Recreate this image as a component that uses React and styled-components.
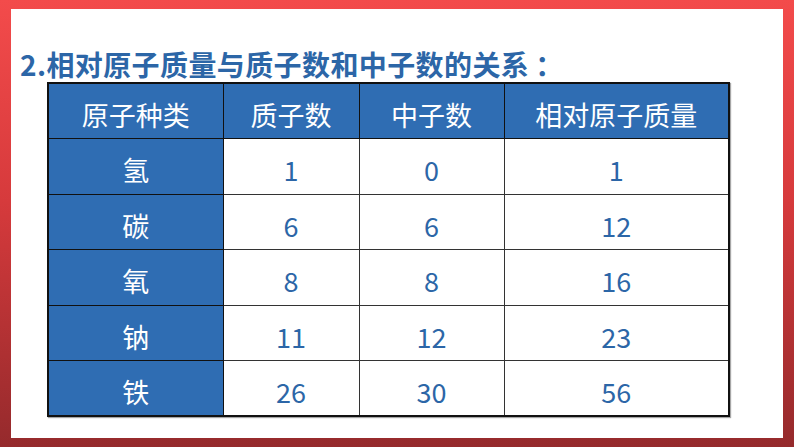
import React from "react";
import styled, { createGlobalStyle } from "styled-components";

const Global = createGlobalStyle`
  html, body { margin: 0; padding: 0; }
  body { font-family: "Noto Sans CJK SC", "Noto Sans", sans-serif; }
`;

const Frame = styled.div`
  width: 794px;
  height: 447px;
  box-sizing: border-box;
  padding: 9px 11px 9px 11px;
  background: linear-gradient(180deg, #f34b4b 0%, #d63a3c 45%, #952a2c 100%);
`;

const Sheet = styled.div`
  height: 100%;
  background: #ffffff;
  padding: 37px 0 0 9px;
  box-sizing: border-box;
`;

const Title = styled.h2`
  margin: 0;
  font-size: 28px;
  line-height: 36px;
  font-weight: 700;
  color: #2c66a7;
  letter-spacing: 0.4px;
`;

const Colon = styled.span`
  margin-left: 6px;
`;

const Table = styled.table`
  margin: 0 0 0 27px;
  border-collapse: collapse;
  border: 2px solid #111;
  box-shadow: 1px 1px 1px rgba(0, 0, 0, 0.35);
  table-layout: fixed;
`;

const Cell = styled.td`
  height: 55.5px;
  padding: 8px 0 0;
  box-sizing: border-box;
  text-align: center;
  vertical-align: middle;
  font-size: 27px;
  font-weight: 400;
  line-height: 36px;
  border: 1px solid ${(p) => (p.$blue ? "#111" : "#333")};
  background: ${(p) => (p.$blue ? "#2f6db3" : "#ffffff")};
  color: ${(p) => (p.$blue ? "#ffffff" : "#2c66a7")};
`;

const widths = [175, 136, 145, 225];
const head = ["原子种类", "质子数", "中子数", "相对原子质量"];
const rows = [
  ["氢", "1", "0", "1"],
  ["碳", "6", "6", "12"],
  ["氧", "8", "8", "16"],
  ["钠", "11", "12", "23"],
  ["铁", "26", "30", "56"],
];

export default function App() {
  return (
    <>
      <Global />
      <Frame>
        <Sheet>
          <Title>
            2.相对原子质量与质子数和中子数的关系<Colon>：</Colon>
          </Title>
          <Table>
            <colgroup>
              {widths.map((w, i) => (
                <col key={i} style={{ width: w }} />
              ))}
            </colgroup>
            <tbody>
              <tr>
                {head.map((h) => (
                  <Cell key={h} as="th" $blue>
                    {h}
                  </Cell>
                ))}
              </tr>
              {rows.map((r) => (
                <tr key={r[0]}>
                  {r.map((v, i) => (
                    <Cell key={i} $blue={i === 0}>
                      {v}
                    </Cell>
                  ))}
                </tr>
              ))}
            </tbody>
          </Table>
        </Sheet>
      </Frame>
    </>
  );
}
